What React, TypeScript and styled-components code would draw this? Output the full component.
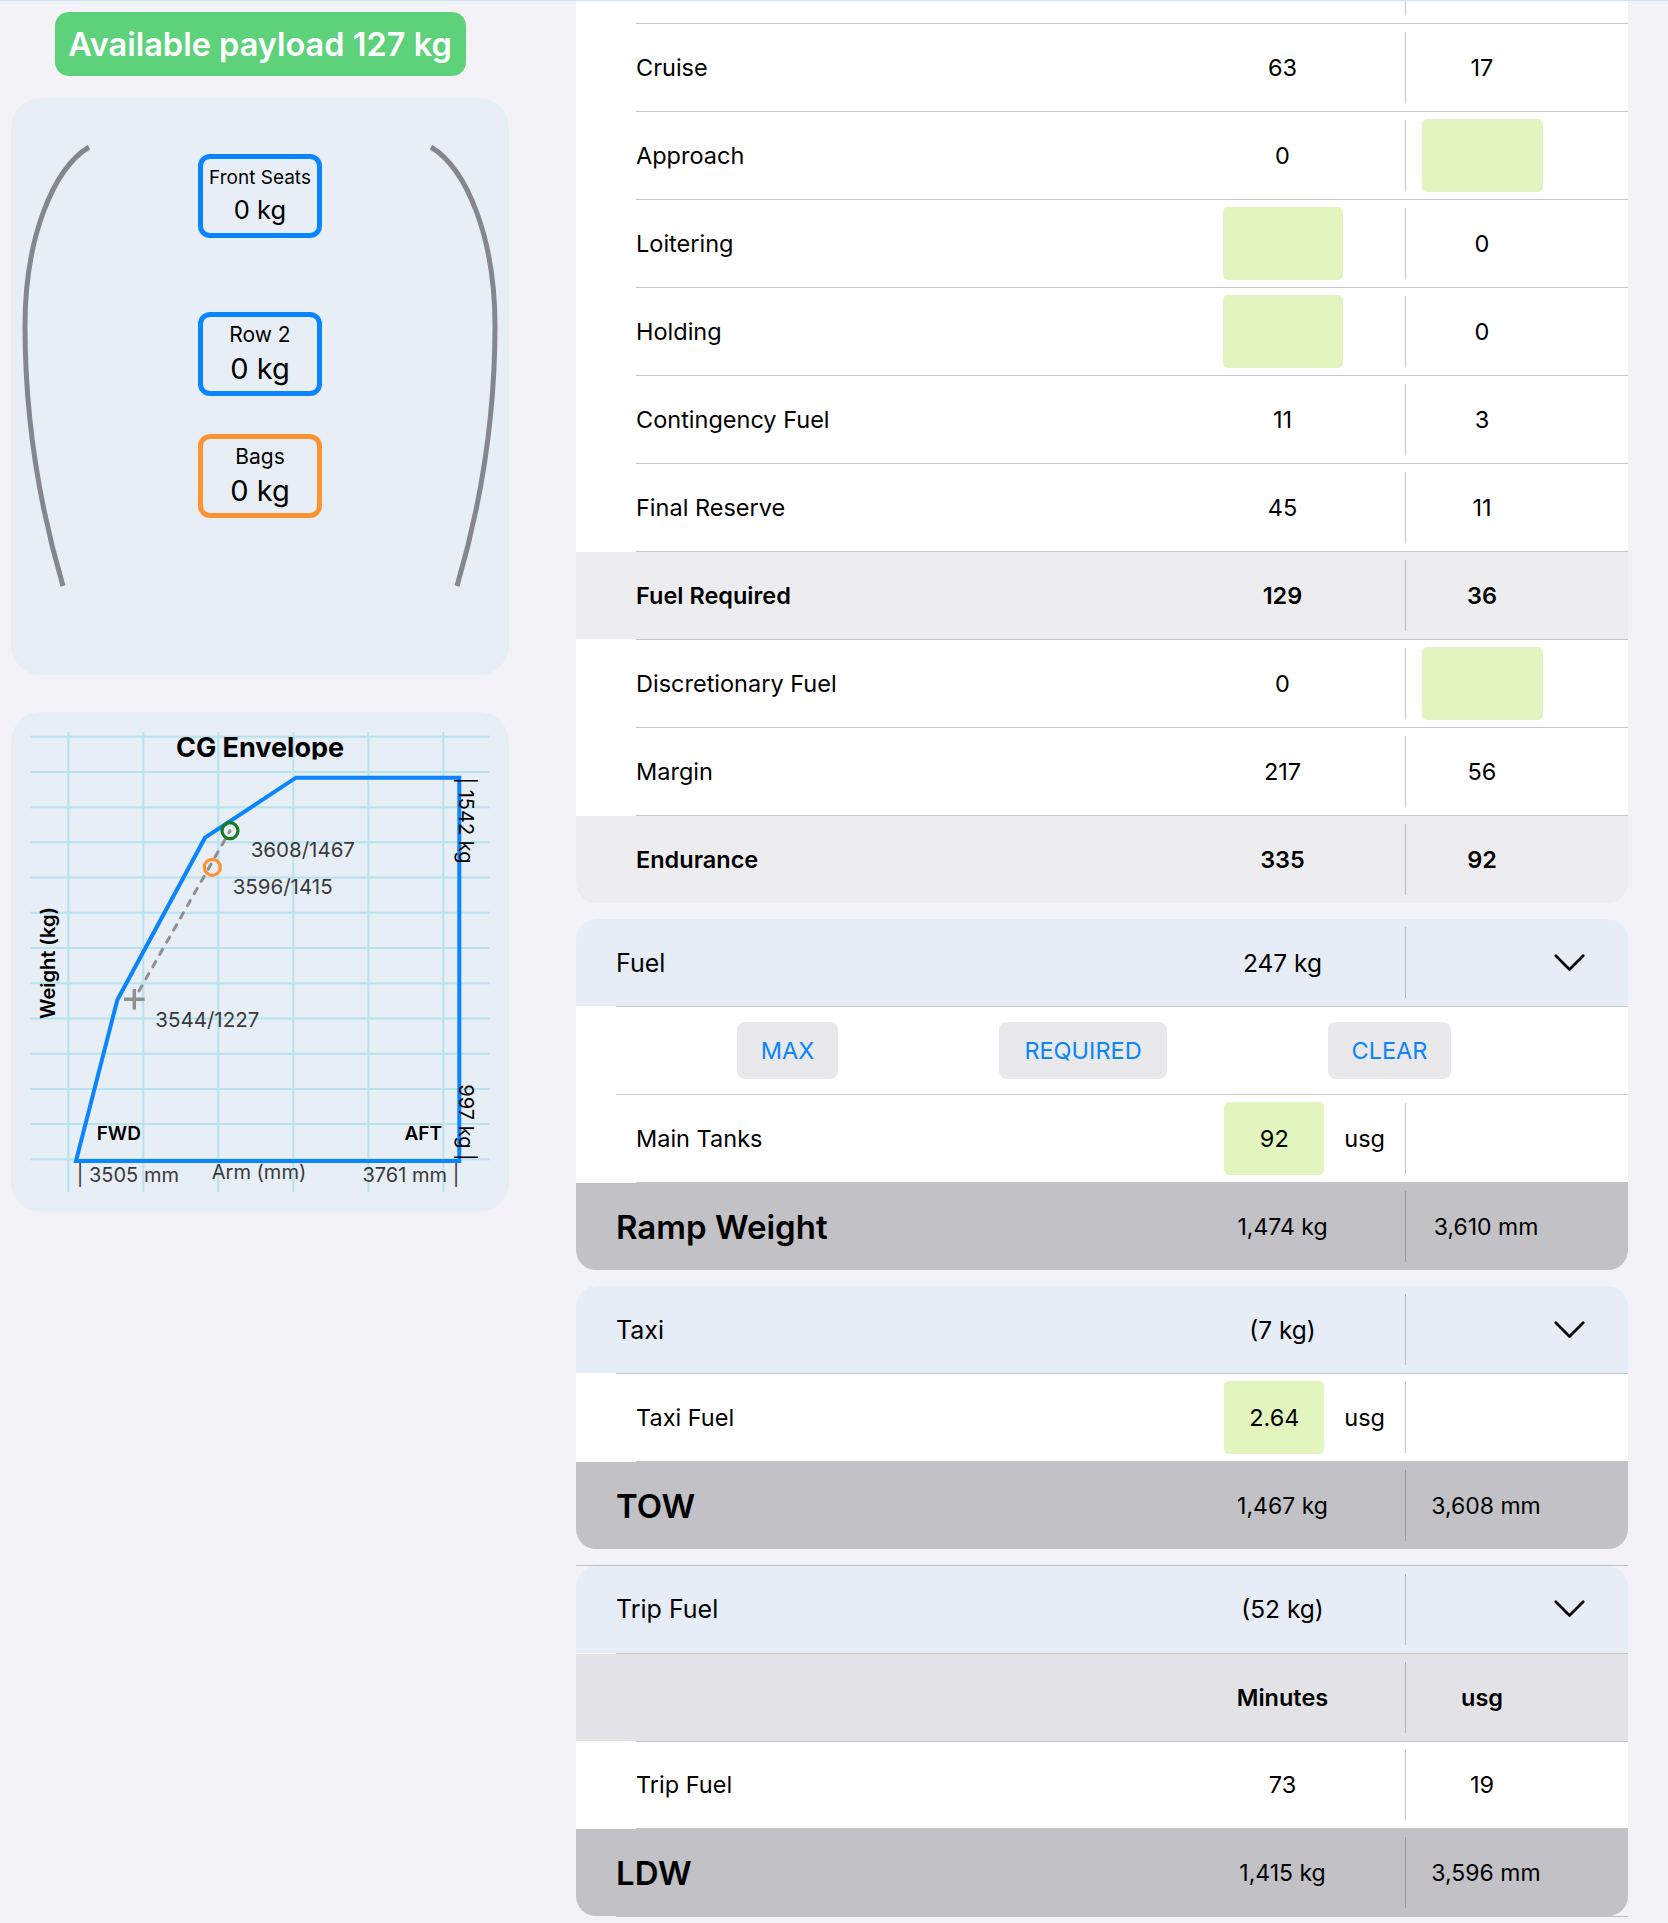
import React from "react";
import styled, { createGlobalStyle } from "styled-components";

const GlobalStyle = createGlobalStyle`
  html, body { margin: 0; padding: 0; background: #f2f2f7; }
  body {
    font-family: Inter, "Noto Sans", "Liberation Sans", sans-serif;
    color: #000;
    -webkit-font-smoothing: antialiased;
  }
  * { box-sizing: border-box; }
`;

const SEP = "rgba(60,60,67,0.29)";

const TopLine = styled.div`
  position: fixed;
  top: 0;
  left: 0;
  right: 0;
  height: 1px;
  background: #cde3f7;
  z-index: 10;
`;

const Page = styled.div`
  display: flex;
  align-items: flex-start;
  gap: 67px;
  width: 1668px;
  height: 1923px;
  padding: 0 40px 0 11px;
  overflow: hidden;
`;

/* ---------------- Left column ---------------- */

const LeftCol = styled.div`
  flex: none;
  width: 498px;
  display: flex;
  flex-direction: column;
  align-items: center;
  padding-top: 12px;
`;

const PayloadBadge = styled.div`
  width: 411px;
  height: 64px;
  border-radius: 14px;
  background: #5dd27b;
  color: #fff;
  font-size: 32.5px;
  font-weight: 600;
  display: flex;
  align-items: center;
  justify-content: center;
`;

const SeatPanel = styled.div`
  position: relative;
  margin-top: 22px;
  width: 498px;
  height: 577px;
  border-radius: 30px;
  background: #e7eef5;
  display: flex;
  flex-direction: column;
  align-items: center;
  padding-top: 56px;
`;

const Fuselage = styled.svg`
  position: absolute;
  left: 0;
  top: 0;
  pointer-events: none;
`;

const SeatBox = styled.div<{ $tone: "blue" | "orange"; $gap: number }>`
  position: relative;
  margin-top: ${(p) => p.$gap}px;
  width: 124px;
  height: 84px;
  border: 5px solid ${(p) => (p.$tone === "blue" ? "#0a84ff" : "#ff9230")};
  border-radius: 12px;
  display: flex;
  flex-direction: column;
  align-items: center;
  justify-content: center;
  gap: 5px;
`;

const SeatLabel = styled.div<{ $size: number }>`
  font-size: ${(p) => p.$size}px;
  line-height: 1.2;
  white-space: nowrap;
`;

const SeatValue = styled.div<{ $size: number }>`
  font-size: ${(p) => p.$size}px;
  line-height: 1.2;
  white-space: nowrap;
`;

const ChartPanel = styled.div`
  margin-top: 37px;
  width: 498px;
  height: 500px;
  border-radius: 30px;
  background: #e7eef5;
  overflow: hidden;
`;

/* ---------------- Right column ---------------- */

const RightCol = styled.div`
  flex: none;
  width: 1052px;
  margin-top: -64px;
  display: flex;
  flex-direction: column;
`;

const Card = styled.section<{ $pitch: number; $gap: number }>`
  --pitch: ${(p) => p.$pitch}px;
  margin-top: ${(p) => p.$gap}px;
  background: #fff;
  border-radius: 20px;
  overflow: hidden;
  display: flex;
  flex-direction: column;
`;

type Tone = "plain" | "summary" | "header" | "sub" | "total";
const toneBg: Record<Tone, string> = {
  plain: "#ffffff",
  summary: "#ededf0",
  header: "#e6edf7",
  sub: "#e3e2e7",
  total: "#c2c1c6",
};

const Row = styled.div<{ $tone: Tone; $indent: number; $cols: string }>`
  flex: none;
  height: calc(var(--pitch) - 1px);
  padding-left: ${(p) => p.$indent}px;
  display: grid;
  grid-template-columns: ${(p) => p.$cols};
  align-items: stretch;
  background: ${(p) => toneBg[p.$tone]};
  font-weight: ${(p) => (p.$tone === "summary" ? 600 : 400)};
`;

const Sep = styled.div<{ $inset: number; $gap?: number }>`
  flex: none;
  height: 1px;
  margin-top: ${(p) => p.$gap ?? 0}px;
  margin-left: ${(p) => p.$inset}px;
  background: ${SEP};
`;

const Label = styled.div<{ $size: number; $weight?: number }>`
  display: flex;
  align-items: center;
  font-size: ${(p) => p.$size}px;
  font-weight: ${(p) => p.$weight ?? "inherit"};
  white-space: nowrap;
`;

const Cell = styled.div<{
  $divider?: boolean;
  $justify?: string;
  $size: number;
  $weight?: number;
  $padRight?: number;
  $padLeft?: number;
  $gap?: number;
}>`
  margin: 8px 0;
  display: flex;
  align-items: center;
  justify-content: ${(p) => p.$justify ?? "center"};
  gap: ${(p) => p.$gap ?? 0}px;
  padding-right: ${(p) => p.$padRight ?? 0}px;
  padding-left: ${(p) => p.$padLeft ?? 0}px;
  font-size: ${(p) => p.$size}px;
  font-weight: ${(p) => p.$weight ?? "inherit"};
  white-space: nowrap;
  border-right: ${(p) => (p.$divider ? `1px solid ${SEP}` : "none")};
`;

const InputBox = styled.div<{ $w: number }>`
  width: ${(p) => p.$w}px;
  height: calc(100% + 2px);
  border-radius: 5px;
  background: #e2f5bf;
  display: flex;
  align-items: center;
  justify-content: center;
  font-size: 23.5px;
  font-weight: 400;
`;

const ButtonBar = styled.div`
  flex: none;
  height: calc(var(--pitch) - 1px);
  display: flex;
  align-items: center;
  justify-content: space-evenly;
  padding-right: 16px;
  background: #fff;
`;

const ActionButton = styled.button<{ $w: number }>`
  width: ${(p) => p.$w}px;
  height: 57px;
  padding: 0;
  border: 0;
  border-radius: 8px;
  background: #e9e9eb;
  color: #0a84ff;
  font-family: inherit;
  font-size: 23.5px;
  font-weight: 400;
`;

const Chevron = () => (
  <svg width="31" height="18" viewBox="0 0 31 18">
    <path
      d="M1.8 1.8 L15.5 15.5 L29.2 1.8"
      fill="none"
      stroke="#000"
      strokeWidth="2.7"
      strokeLinecap="round"
      strokeLinejoin="round"
    />
  </svg>
);

const DATA_COLS = "1fr 246px 152px 70px";
const HEAD_COLS = "1fr 246px 222px";

type V = string | { input: true };
const INPUT: V = { input: true };

const renderValue = (v: V, w: number) =>
  typeof v === "string" ? v : <InputBox $w={w} />;

const planRows: { label: string; a: V; b: V; summary?: boolean }[] = [
  { label: "", a: "", b: "" },
  { label: "Cruise", a: "63", b: "17" },
  { label: "Approach", a: "0", b: INPUT },
  { label: "Loitering", a: INPUT, b: "0" },
  { label: "Holding", a: INPUT, b: "0" },
  { label: "Contingency Fuel", a: "11", b: "3" },
  { label: "Final Reserve", a: "45", b: "11" },
  { label: "Fuel Required", a: "129", b: "36", summary: true },
  { label: "Discretionary Fuel", a: "0", b: INPUT },
  { label: "Margin", a: "217", b: "56" },
  { label: "Endurance", a: "335", b: "92", summary: true },
];

const HeaderRow = ({ label, value }: { label: string; value: string }) => (
  <Row $tone="header" $indent={40} $cols={HEAD_COLS}>
    <Label $size={25}>{label}</Label>
    <Cell $divider $size={24.5}>
      {value}
    </Cell>
    <Cell $justify="flex-end" $padRight={43} $size={24}>
      <Chevron />
    </Cell>
  </Row>
);

const TotalRow = ({ label, kg, mm }: { label: string; kg: string; mm: string }) => (
  <Row $tone="total" $indent={40} $cols={DATA_COLS}>
    <Label $size={33} $weight={600}>
      {label}
    </Label>
    <Cell $divider $size={23}>
      {kg}
    </Cell>
    <Cell $size={23} $padLeft={8}>
      {mm}
    </Cell>
    <div />
  </Row>
);

const UnitRow = ({ label, value }: { label: string; value: string }) => (
  <Row $tone="plain" $indent={60} $cols={DATA_COLS}>
    <Label $size={23.5}>{label}</Label>
    <Cell $divider $justify="flex-end" $padRight={20} $gap={20} $size={23.5}>
      <InputBox $w={100}>{value}</InputBox>
      <span>usg</span>
    </Cell>
    <div />
    <div />
  </Row>
);

/* ---------------- CG chart ---------------- */

const gridYs = Array.from({ length: 13 }, (_, i) => 24.7 + i * 35.22);
const gridXs = [57.3, 132.3, 207.3, 282.3, 357.3, 432.3];
const GRID = "#b6e3ee";
const LBL = "#3a3a3c";

const CGChart = () => (
  <svg width="498" height="500" viewBox="0 0 498 500" fontFamily="Inter, 'Noto Sans', sans-serif">
    <defs>
      <clipPath id="cgTitleClip">
        <rect x="0" y="0" width="498" height="47.6" />
      </clipPath>
    </defs>
    {gridYs.map((y) => (
      <line key={"h" + y} x1="19" x2="479" y1={y} y2={y} stroke={GRID} strokeWidth="2" />
    ))}
    {gridXs.map((x) => (
      <line key={"v" + x} x1={x} x2={x} y1="20" y2="480" stroke={GRID} strokeWidth="2" />
    ))}
    <text
      x="249"
      y="45.3"
      textAnchor="middle"
      fontSize="27"
      fontWeight="700"
      fill="#000"
      clipPath="url(#cgTitleClip)"
    >
      CG Envelope
    </text>
    <polygon
      points="65,449 106.3,288 194,125.7 285,65.7 448.3,65.7 448.3,449"
      fill="none"
      stroke="#0a84ff"
      strokeWidth="4"
    />
    <line
      x1="128"
      y1="279"
      x2="219"
      y2="118.7"
      stroke="#8e8e93"
      strokeWidth="3"
      strokeDasharray="6 8"
      strokeLinecap="round"
    />
    <path d="M113 287.3 H133.6 M123.3 277 V297.6" stroke="#8e8e93" strokeWidth="3.4" />
    <circle cx="219" cy="118.7" r="8" fill="none" stroke="#1a7a1f" strokeWidth="3.2" />
    <circle cx="201.3" cy="155.3" r="8" fill="none" stroke="#ff9230" strokeWidth="3.2" />

    <text x="239.7" y="145" fontSize="20.5" fill={LBL}>3608/1467</text>
    <text x="221.7" y="182" fontSize="20.5" fill={LBL}>3596/1415</text>
    <text x="144.3" y="314.7" fontSize="20.5" fill={LBL}>3544/1227</text>

    <text x="85.7" y="428" fontSize="19" fontWeight="600" fill="#000">FWD</text>
    <text x="431" y="428" fontSize="19" fontWeight="600" fill="#000" textAnchor="end">AFT</text>

    <text x="65.7" y="469.7" fontSize="20" fill={LBL}>| 3505 mm</text>
    <text x="248" y="467" fontSize="20" fill={LBL} textAnchor="middle">Arm (mm)</text>
    <text x="448.3" y="469.7" fontSize="20" fill={LBL} textAnchor="end">3761 mm |</text>

    <text
      x="36.5"
      y="251"
      fontSize="20"
      fontWeight="600"
      fill="#000"
      textAnchor="middle"
      dominantBaseline="central"
      transform="rotate(-90 36.5 251)"
    >
      Weight (kg)
    </text>
    <text
      x="454.5"
      y="108.5"
      fontSize="20"
      fill="#000"
      textAnchor="middle"
      dominantBaseline="central"
      transform="rotate(90 454.5 108.5)"
    >
      | 1542 kg
    </text>
    <text
      x="454.5"
      y="410.5"
      fontSize="20"
      fill="#000"
      textAnchor="middle"
      dominantBaseline="central"
      transform="rotate(90 454.5 410.5)"
    >
      997 kg |
    </text>
  </svg>
);

export default function App() {
  return (
    <>
      <GlobalStyle />
      <TopLine />
      <Page>
        <LeftCol>
          <PayloadBadge>Available payload 127 kg</PayloadBadge>
          <SeatPanel>
            <Fuselage width="498" height="577" viewBox="0 0 498 577">
              <path
                d="M78 49 C42 71 14 140 14 228 C14 330 32 420 52 488"
                fill="none"
                stroke="#86878e"
                strokeWidth="5"
              />
              <path
                d="M420 49 C456 71 484 140 484 228 C484 330 466 420 446 488"
                fill="none"
                stroke="#86878e"
                strokeWidth="5"
              />
            </Fuselage>
            <SeatBox $tone="blue" $gap={0}>
              <SeatLabel $size={19}>Front Seats</SeatLabel>
              <SeatValue $size={25.5}>0 kg</SeatValue>
            </SeatBox>
            <SeatBox $tone="blue" $gap={74}>
              <SeatLabel $size={21}>Row 2</SeatLabel>
              <SeatValue $size={29}>0 kg</SeatValue>
            </SeatBox>
            <SeatBox $tone="orange" $gap={38}>
              <SeatLabel $size={21}>Bags</SeatLabel>
              <SeatValue $size={29}>0 kg</SeatValue>
            </SeatBox>
          </SeatPanel>
          <ChartPanel>
            <CGChart />
          </ChartPanel>
        </LeftCol>

        <RightCol>
          <Card $pitch={88} $gap={0}>
            {planRows.map((r, i) => (
              <React.Fragment key={i}>
                {i > 0 && <Sep $inset={60} />}
                <Row $tone={r.summary ? "summary" : "plain"} $indent={60} $cols={DATA_COLS}>
                  <Label $size={23.5}>{r.label}</Label>
                  <Cell $divider $size={23.5}>
                    {renderValue(r.a, 120)}
                  </Cell>
                  <Cell $size={23.5}>{renderValue(r.b, 121)}</Cell>
                  <div />
                </Row>
              </React.Fragment>
            ))}
          </Card>

          <Card $pitch={88} $gap={16}>
            <HeaderRow label="Fuel" value="247 kg" />
            <Sep $inset={40} />
            <ButtonBar>
              <ActionButton $w={101}>MAX</ActionButton>
              <ActionButton $w={168}>REQUIRED</ActionButton>
              <ActionButton $w={123}>CLEAR</ActionButton>
            </ButtonBar>
            <Sep $inset={40} />
            <UnitRow label="Main Tanks" value="92" />
            <Sep $inset={60} />
            <TotalRow label="Ramp Weight" kg="1,474 kg" mm="3,610 mm" />
          </Card>

          <Card $pitch={88} $gap={16}>
            <HeaderRow label="Taxi" value="(7 kg)" />
            <Sep $inset={40} />
            <UnitRow label="Taxi Fuel" value="2.64" />
            <Sep $inset={60} />
            <TotalRow label="TOW" kg="1,467 kg" mm="3,608 mm" />
          </Card>

          <Sep $inset={0} $gap={16} />
          <Card $pitch={87.75} $gap={0}>
            <HeaderRow label="Trip Fuel" value="(52 kg)" />
            <Sep $inset={40} />
            <Row $tone="sub" $indent={60} $cols={DATA_COLS}>
              <Label $size={23.5} />
              <Cell $divider $size={23.5} $weight={600}>
                Minutes
              </Cell>
              <Cell $size={23.5} $weight={600}>
                usg
              </Cell>
              <div />
            </Row>
            <Sep $inset={60} />
            <Row $tone="plain" $indent={60} $cols={DATA_COLS}>
              <Label $size={23.5}>Trip Fuel</Label>
              <Cell $divider $size={23.5}>
                73
              </Cell>
              <Cell $size={23.5}>19</Cell>
              <div />
            </Row>
            <Sep $inset={60} />
            <TotalRow label="LDW" kg="1,415 kg" mm="3,596 mm" />
          </Card>
          <Sep $inset={40} />
        </RightCol>
      </Page>
    </>
  );
}
